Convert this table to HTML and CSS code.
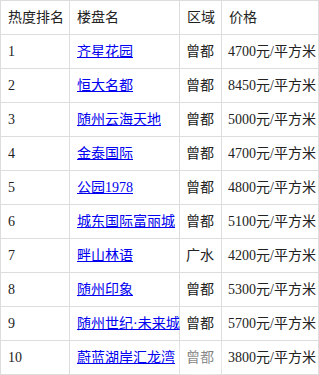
FILE: index.html
```html
<!DOCTYPE html>
<html lang="zh">
<head>
<meta charset="utf-8">
<link rel="stylesheet" href="styles.css">
</head>
<body>
<div class="wrap">
<table class="rank">
  <colgroup>
    <col class="c1"><col class="c2"><col class="c3"><col class="c4">
  </colgroup>
  <thead>
    <tr><th>热度排名</th><th>楼盘名</th><th>区域</th><th>价格</th></tr>
  </thead>
  <tbody>
    <tr><td>1</td><td><a href="#">齐星花园</a></td><td>曾都</td><td>4700元/平方米</td></tr>
    <tr><td>2</td><td><a href="#">恒大名都</a></td><td>曾都</td><td>8450元/平方米</td></tr>
    <tr><td>3</td><td><a href="#">随州云海天地</a></td><td>曾都</td><td>5000元/平方米</td></tr>
    <tr><td>4</td><td><a href="#">金泰国际</a></td><td>曾都</td><td>4700元/平方米</td></tr>
    <tr><td>5</td><td><a href="#">公园1978</a></td><td>曾都</td><td>4800元/平方米</td></tr>
    <tr><td>6</td><td><a href="#">城东国际富丽城</a></td><td>曾都</td><td>5100元/平方米</td></tr>
    <tr><td>7</td><td><a href="#">畔山林语</a></td><td>广水</td><td>4200元/平方米</td></tr>
    <tr><td>8</td><td><a href="#">随州印象</a></td><td>曾都</td><td>5300元/平方米</td></tr>
    <tr><td>9</td><td><a href="#">随州世纪·未来城</a></td><td>曾都</td><td>5700元/平方米</td></tr>
    <tr><td>10</td><td><a href="#">蔚蓝湖岸汇龙湾</a></td><td>曾都</td><td>3800元/平方米</td></tr>
  </tbody>
</table>
<div class="mark"></div>
</div>
</body>
</html>
```
FILE: styles.css
```css
html, body {
  margin: 0;
  padding: 0;
  background: #fff;
}
.wrap {
  position: relative;
  width: 319px;
}
.rank {
  border-collapse: collapse;
  table-layout: fixed;
  width: 318px;
  font-family: "Liberation Serif", "Noto Sans CJK SC", serif;
  font-size: 14px;
  color: #222;
}
.c1 { width: 69px; }
.c2 { width: 110px; }
.c3 { width: 42px; }
.c4 { width: 97px; }
.rank th,
.rank td {
  border: 1px solid #dddddd;
  padding: 0 1px 0 7px;
  height: 34px;
  box-sizing: border-box;
  line-height: 20px;
  text-align: left;
  font-weight: normal;
  white-space: nowrap;
  vertical-align: middle;
}
.rank td:nth-child(3),
.rank td:nth-child(4) { padding-left: 6px; }
.rank a {
  color: #0000ee;
  text-decoration: underline;
}
.mark {
  position: absolute;
  left: 176px;
  top: 342px;
  width: 50px;
  height: 33px;
  background: radial-gradient(ellipse at center, rgba(255,255,255,0.55) 0%, rgba(255,255,255,0.35) 60%, rgba(255,255,255,0) 100%);
  pointer-events: none;
}
```
